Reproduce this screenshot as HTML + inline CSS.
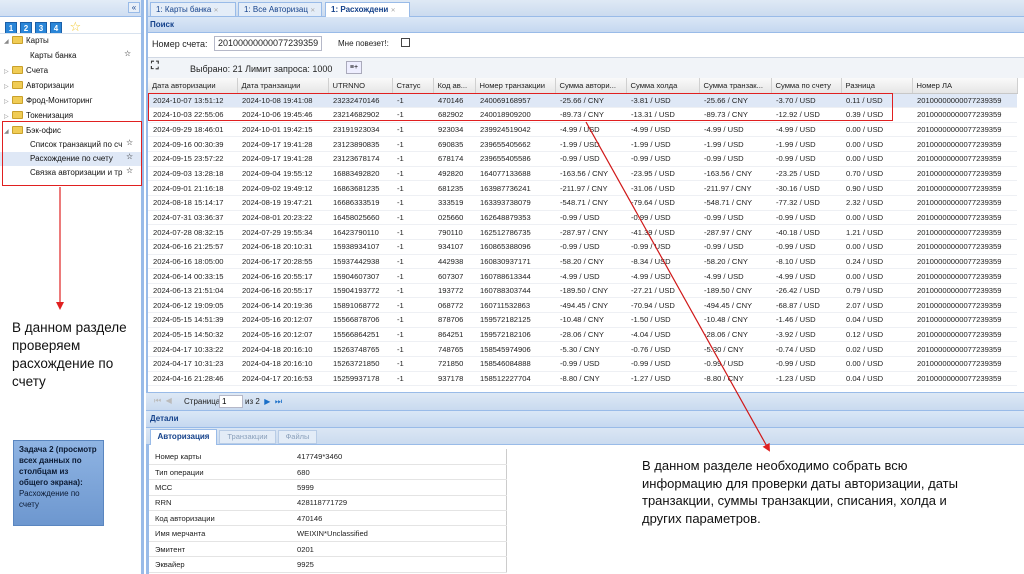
<!DOCTYPE html>
<html><head><meta charset="utf-8"><style>
*{margin:0;padding:0;box-sizing:border-box}
body{width:1024px;height:574px;overflow:hidden;background:#fff;font-family:"Liberation Sans","DejaVu Sans",sans-serif;position:relative;color:#000}
.a{position:absolute}
.sb{left:0;top:0;width:144px;height:574px;background:#fff;border-right:3px solid #99bbe8}
.tree div{position:absolute;font-size:8px;height:14px;line-height:14px;color:#111;white-space:nowrap}
.fold{display:inline-block;width:11px;height:8px;background:#f0cc55;border:1px solid #c9a02b;border-radius:1px;vertical-align:-1px;margin-right:3px}
.tri{display:inline-block;width:8px;color:#888;font-size:6px}
.num{display:inline-block;width:12px;height:12px;background:#2a86d8;color:#fff;font-size:8px;font-weight:bold;text-align:center;line-height:12px;margin-right:3px;border:1px solid #1a5fa8}
.star{color:#f2c830;font-size:13px}
.stare{color:#ddd;font-size:13px}
table{border-collapse:collapse;table-layout:fixed}
.g td{font-size:7.6px;height:14.65px;padding-left:5px;white-space:nowrap;overflow:hidden;color:#222;border-bottom:1px solid #eef0f4}
.g th{font-size:7.6px;height:15px;font-weight:normal;text-align:left;padding-left:4px;background:linear-gradient(#fafafa,#e6e6e6);border-right:1px solid #d0d0d0;border-bottom:1px solid #c8c8c8;white-space:nowrap;overflow:hidden;color:#222}
.hdr{background:linear-gradient(#dae7f6,#c5d8f0);border-bottom:1px solid #99bbe8;color:#15428b;font-weight:bold;font-size:8px;padding-left:4px}
.d td{font-size:7.6px;height:15.4px;border-bottom:1px solid #e4e4e4;padding-left:6px;color:#222}
</style></head><body>

<div class="a sb">
 <div class="a" style="left:0;top:0;width:141px;height:17px;background:linear-gradient(#e3ecf7,#cfdef2);border-bottom:1px solid #99bbe8"></div>
 <div class="a" style="left:128px;top:2px;width:12px;height:11px;border:1px solid #99bbe8;background:#e8eff8;font-size:8px;line-height:9px;text-align:center;color:#15428b">«</div>
 <div class="a" style="left:5px;top:18px;white-space:nowrap"><span class="num">1</span><span class="num">2</span><span class="num">3</span><span class="num">4</span> <span class="star">☆</span></div>
 <div class="a" style="left:0;top:33px;width:141px;height:1px;background:#d8e2ee"></div>
 <div class="tree">
  <div style="left:4px;top:34px"><span class="tri">◢</span><span class="fold"></span>Карты</div>
  <div style="left:30px;top:49px">Карты банка</div><div style="left:124px;top:47px" class="star">☆</div>
  <div style="left:4px;top:64px"><span class="tri">▷</span><span class="fold"></span>Счета</div>
  <div style="left:4px;top:79px"><span class="tri">▷</span><span class="fold"></span>Авторизации</div>
  <div style="left:4px;top:94px"><span class="tri">▷</span><span class="fold"></span>Фрод-Мониторинг</div>
  <div style="left:4px;top:109px"><span class="tri">▷</span><span class="fold"></span>Токенизация</div>
  <div style="left:4px;top:124px"><span class="tri">◢</span><span class="fold"></span>Бэк-офис</div>
  <div style="left:30px;top:138px">Список транзакций по сч</div><div style="left:126px;top:136px" class="stare">☆</div>
  <div style="left:0;top:152px;width:141px;height:14px;background:#dfe8f6"></div>
  <div style="left:30px;top:152px">Расхождение по счету</div><div style="left:126px;top:150px" class="star">☆</div>
  <div style="left:30px;top:166px">Связка авторизации и тр</div><div style="left:126px;top:164px" class="stare">☆</div>
 </div>
 <div class="a" style="left:2px;top:121px;width:140px;height:65px;border:1px solid #e02020"></div>
 <div class="a" style="left:12px;top:319px;width:130px;font-size:13.5px;line-height:18px;color:#111">В данном разделе проверяем расхождение по счету</div>
 <div class="a" style="left:13px;top:440px;width:91px;height:86px;background:linear-gradient(#8fb4e3,#6d97cf);border:1px solid #5a86c0;padding:3px 5px;font-size:8px;line-height:11px;color:#0b1a33"><b>Задача 2 (просмотр всех данных по столбцам из общего экрана):</b> Расхождение по счету</div>
</div>

<!-- main -->
<div class="a" style="left:146px;top:0;width:878px;height:17px;background:linear-gradient(#dfe9f5,#cbdbef);border-bottom:1px solid #99bbe8"></div>
<div class="a" style="left:150px;top:2px;width:86px;height:15px;background:#e4edf8;border:1px solid #99bbe8;font-size:8px;line-height:13px;padding-left:5px;color:#15428b">1: Карты банка <span style="color:#aaa;font-size:6px">✕</span></div>
<div class="a" style="left:238px;top:2px;width:84px;height:15px;background:#e4edf8;border:1px solid #99bbe8;font-size:8px;line-height:13px;padding-left:5px;color:#15428b;white-space:nowrap;overflow:hidden">1: Все Авторизац <span style="color:#aaa;font-size:6px">✕</span></div>
<div class="a" style="left:325px;top:2px;width:85px;height:16px;background:#fff;border:1px solid #99bbe8;border-bottom:none;font-size:8px;line-height:13px;padding-left:5px;color:#15428b;font-weight:bold;white-space:nowrap;overflow:hidden">1: Расхождени <span style="color:#aaa;font-size:6px">✕</span></div>
<div class="a hdr" style="left:146px;top:17px;width:878px;height:16px;line-height:15px">Поиск</div>
<div class="a" style="left:146px;top:33px;width:878px;height:24px;background:#fff"></div>
<div class="a" style="left:152px;top:39px;font-size:9px;color:#222">Номер счета:</div>
<div class="a" style="left:214px;top:36px;width:108px;height:15px;border:1px solid #b5b8c8;font-size:9px;line-height:13px;padding-left:3px;color:#222">20100000000077239359</div>
<div class="a" style="left:338px;top:39px;font-size:8px;color:#222">Мне повезет!:</div>
<div class="a" style="left:401px;top:38px;width:9px;height:9px;border:1px solid #444"></div>
<div class="a" style="left:146px;top:57px;width:878px;height:21px;background:#f1f4f8;border-top:1px solid #d0d8e4"></div>
<div class="a" style="left:151px;top:61px;font-size:11px;line-height:11px;font-weight:bold;color:#333">⛶</div>
<div class="a" style="left:190px;top:64px;font-size:9px;color:#222">Выбрано: 21 Лимит запроса: 1000</div>
<div class="a" style="left:346px;top:61px;width:16px;height:13px;border:1px solid #aab;background:#eef;font-size:7px;text-align:center;line-height:11px">≡+</div>

<table class="a g" style="left:148px;top:78px;width:869px">
<colgroup><col style="width:89px"><col style="width:91px"><col style="width:64px"><col style="width:41px"><col style="width:42px"><col style="width:80px"><col style="width:71px"><col style="width:73px"><col style="width:72px"><col style="width:70px"><col style="width:71px"><col style="width:105px"></colgroup>
<tr><th>Дата авторизации</th><th>Дата транзакции</th><th>UTRNNO</th><th>Статус</th><th>Код ав...</th><th>Номер транзакции</th><th>Сумма автори...</th><th>Сумма холда</th><th>Сумма транзак...</th><th>Сумма по счету</th><th>Разница</th><th>Номер ЛА</th></tr>
<tr style="background:#dfe8f6"><td>2024-10-07 13:51:12</td><td>2024-10-08 19:41:08</td><td>23232470146</td><td>-1</td><td>470146</td><td>240069168957</td><td>-25.66 / CNY</td><td>-3.81 / USD</td><td>-25.66 / CNY</td><td>-3.70 / USD</td><td>0.11 / USD</td><td>20100000000077239359</td></tr>
<tr><td>2024-10-03 22:55:06</td><td>2024-10-06 19:45:46</td><td>23214682902</td><td>-1</td><td>682902</td><td>240018909200</td><td>-89.73 / CNY</td><td>-13.31 / USD</td><td>-89.73 / CNY</td><td>-12.92 / USD</td><td>0.39 / USD</td><td>20100000000077239359</td></tr>
<tr><td>2024-09-29 18:46:01</td><td>2024-10-01 19:42:15</td><td>23191923034</td><td>-1</td><td>923034</td><td>239924519042</td><td>-4.99 / USD</td><td>-4.99 / USD</td><td>-4.99 / USD</td><td>-4.99 / USD</td><td>0.00 / USD</td><td>20100000000077239359</td></tr>
<tr><td>2024-09-16 00:30:39</td><td>2024-09-17 19:41:28</td><td>23123890835</td><td>-1</td><td>690835</td><td>239655405662</td><td>-1.99 / USD</td><td>-1.99 / USD</td><td>-1.99 / USD</td><td>-1.99 / USD</td><td>0.00 / USD</td><td>20100000000077239359</td></tr>
<tr><td>2024-09-15 23:57:22</td><td>2024-09-17 19:41:28</td><td>23123678174</td><td>-1</td><td>678174</td><td>239655405586</td><td>-0.99 / USD</td><td>-0.99 / USD</td><td>-0.99 / USD</td><td>-0.99 / USD</td><td>0.00 / USD</td><td>20100000000077239359</td></tr>
<tr><td>2024-09-03 13:28:18</td><td>2024-09-04 19:55:12</td><td>16883492820</td><td>-1</td><td>492820</td><td>164077133688</td><td>-163.56 / CNY</td><td>-23.95 / USD</td><td>-163.56 / CNY</td><td>-23.25 / USD</td><td>0.70 / USD</td><td>20100000000077239359</td></tr>
<tr><td>2024-09-01 21:16:18</td><td>2024-09-02 19:49:12</td><td>16863681235</td><td>-1</td><td>681235</td><td>163987736241</td><td>-211.97 / CNY</td><td>-31.06 / USD</td><td>-211.97 / CNY</td><td>-30.16 / USD</td><td>0.90 / USD</td><td>20100000000077239359</td></tr>
<tr><td>2024-08-18 15:14:17</td><td>2024-08-19 19:47:21</td><td>16686333519</td><td>-1</td><td>333519</td><td>163393738079</td><td>-548.71 / CNY</td><td>-79.64 / USD</td><td>-548.71 / CNY</td><td>-77.32 / USD</td><td>2.32 / USD</td><td>20100000000077239359</td></tr>
<tr><td>2024-07-31 03:36:37</td><td>2024-08-01 20:23:22</td><td>16458025660</td><td>-1</td><td>025660</td><td>162648879353</td><td>-0.99 / USD</td><td>-0.99 / USD</td><td>-0.99 / USD</td><td>-0.99 / USD</td><td>0.00 / USD</td><td>20100000000077239359</td></tr>
<tr><td>2024-07-28 08:32:15</td><td>2024-07-29 19:55:34</td><td>16423790110</td><td>-1</td><td>790110</td><td>162512786735</td><td>-287.97 / CNY</td><td>-41.39 / USD</td><td>-287.97 / CNY</td><td>-40.18 / USD</td><td>1.21 / USD</td><td>20100000000077239359</td></tr>
<tr><td>2024-06-16 21:25:57</td><td>2024-06-18 20:10:31</td><td>15938934107</td><td>-1</td><td>934107</td><td>160865388096</td><td>-0.99 / USD</td><td>-0.99 / USD</td><td>-0.99 / USD</td><td>-0.99 / USD</td><td>0.00 / USD</td><td>20100000000077239359</td></tr>
<tr><td>2024-06-16 18:05:00</td><td>2024-06-17 20:28:55</td><td>15937442938</td><td>-1</td><td>442938</td><td>160830937171</td><td>-58.20 / CNY</td><td>-8.34 / USD</td><td>-58.20 / CNY</td><td>-8.10 / USD</td><td>0.24 / USD</td><td>20100000000077239359</td></tr>
<tr><td>2024-06-14 00:33:15</td><td>2024-06-16 20:55:17</td><td>15904607307</td><td>-1</td><td>607307</td><td>160788613344</td><td>-4.99 / USD</td><td>-4.99 / USD</td><td>-4.99 / USD</td><td>-4.99 / USD</td><td>0.00 / USD</td><td>20100000000077239359</td></tr>
<tr><td>2024-06-13 21:51:04</td><td>2024-06-16 20:55:17</td><td>15904193772</td><td>-1</td><td>193772</td><td>160788303744</td><td>-189.50 / CNY</td><td>-27.21 / USD</td><td>-189.50 / CNY</td><td>-26.42 / USD</td><td>0.79 / USD</td><td>20100000000077239359</td></tr>
<tr><td>2024-06-12 19:09:05</td><td>2024-06-14 20:19:36</td><td>15891068772</td><td>-1</td><td>068772</td><td>160711532863</td><td>-494.45 / CNY</td><td>-70.94 / USD</td><td>-494.45 / CNY</td><td>-68.87 / USD</td><td>2.07 / USD</td><td>20100000000077239359</td></tr>
<tr><td>2024-05-15 14:51:39</td><td>2024-05-16 20:12:07</td><td>15566878706</td><td>-1</td><td>878706</td><td>159572182125</td><td>-10.48 / CNY</td><td>-1.50 / USD</td><td>-10.48 / CNY</td><td>-1.46 / USD</td><td>0.04 / USD</td><td>20100000000077239359</td></tr>
<tr><td>2024-05-15 14:50:32</td><td>2024-05-16 20:12:07</td><td>15566864251</td><td>-1</td><td>864251</td><td>159572182106</td><td>-28.06 / CNY</td><td>-4.04 / USD</td><td>-28.06 / CNY</td><td>-3.92 / USD</td><td>0.12 / USD</td><td>20100000000077239359</td></tr>
<tr><td>2024-04-17 10:33:22</td><td>2024-04-18 20:16:10</td><td>15263748765</td><td>-1</td><td>748765</td><td>158545974906</td><td>-5.30 / CNY</td><td>-0.76 / USD</td><td>-5.30 / CNY</td><td>-0.74 / USD</td><td>0.02 / USD</td><td>20100000000077239359</td></tr>
<tr><td>2024-04-17 10:31:23</td><td>2024-04-18 20:16:10</td><td>15263721850</td><td>-1</td><td>721850</td><td>158546084888</td><td>-0.99 / USD</td><td>-0.99 / USD</td><td>-0.99 / USD</td><td>-0.99 / USD</td><td>0.00 / USD</td><td>20100000000077239359</td></tr>
<tr><td>2024-04-16 21:28:46</td><td>2024-04-17 20:16:53</td><td>15259937178</td><td>-1</td><td>937178</td><td>158512227704</td><td>-8.80 / CNY</td><td>-1.27 / USD</td><td>-8.80 / CNY</td><td>-1.23 / USD</td><td>0.04 / USD</td><td>20100000000077239359</td></tr>
</table>
<div class="a" style="left:148px;top:93px;width:745px;height:28px;border:1px solid #e02020"></div>

<!-- pager -->
<div class="a" style="left:146px;top:392px;width:878px;height:19px;background:linear-gradient(#dde8f5,#c9daef);border-top:1px solid #99bbe8;border-bottom:1px solid #99bbe8"></div>
<div class="a" style="left:154px;top:396px;font-size:8px;color:#bbb">⏮ &nbsp;◀</div>
<div class="a" style="left:184px;top:397px;font-size:8px;color:#222">Страница</div>
<div class="a" style="left:219px;top:395px;width:24px;height:13px;background:#fff;border:1px solid #b5b8c8;font-size:8px;padding-left:2px;line-height:11px">1</div>
<div class="a" style="left:245px;top:397px;font-size:8px;color:#222">из 2 &nbsp;<span style="color:#1a6fc8">▶ &nbsp;⏭</span></div>
<div class="a hdr" style="left:146px;top:411px;width:878px;height:17px;line-height:16px">Детали</div>
<div class="a" style="left:146px;top:428px;width:878px;height:17px;background:linear-gradient(#dbe6f4,#cbdbef);border-bottom:1px solid #99bbe8"></div>
<div class="a" style="left:150px;top:429px;width:67px;height:16px;background:#fff;border:1px solid #99bbe8;border-bottom:none;font-size:8px;font-weight:bold;color:#15428b;text-align:center;line-height:14px">Авторизация</div>
<div class="a" style="left:219px;top:430px;width:57px;height:14px;background:#e3ecf7;border:1px solid #b8cce6;font-size:7.5px;color:#8aa0bb;text-align:center;line-height:12px">Транзакции</div>
<div class="a" style="left:278px;top:430px;width:39px;height:14px;background:#e3ecf7;border:1px solid #b8cce6;font-size:7.5px;color:#8aa0bb;text-align:center;line-height:12px">Файлы</div>
<div class="a" style="left:146px;top:445px;width:3px;height:129px;background:#99bbe8"></div>
<div class="a" style="left:146px;top:0;width:2px;height:392px;background:#99bbe8"></div>
<table class="a d" style="left:149px;top:449px;width:358px;border-right:1px solid #ccc">
<colgroup><col style="width:142px"><col></colgroup>
<tr><td>Номер карты</td><td>417749*3460</td></tr>
<tr><td>Тип операции</td><td>680</td></tr>
<tr><td>MCC</td><td>5999</td></tr>
<tr><td>RRN</td><td>428118771729</td></tr>
<tr><td>Код авторизации</td><td>470146</td></tr>
<tr><td>Имя мерчанта</td><td>WEIXIN*Unclassified</td></tr>
<tr><td>Эмитент</td><td>0201</td></tr>
<tr><td>Эквайер</td><td>9925</td></tr>
</table>
<div class="a" style="left:642px;top:457px;white-space:nowrap;font-size:13px;line-height:17.6px;color:#111">В данном разделе необходимо собрать всю<br>информацию для проверки даты авторизации, даты<br>транзакции, суммы транзакции, списания, холда и<br>других параметров.</div>

<svg class="a" style="left:0;top:0" width="1024" height="574">
<defs><marker id="m" markerWidth="8" markerHeight="8" refX="6" refY="4" orient="auto" markerUnits="userSpaceOnUse"><path d="M0,0 L8,4 L0,8 z" fill="#e02020"/></marker></defs>
<line x1="60" y1="187" x2="60" y2="308" stroke="#e02020" stroke-width="1.2" marker-end="url(#m)"/>
<line x1="586" y1="122" x2="769" y2="450" stroke="#d01818" stroke-width="1.2" marker-end="url(#m)"/>
</svg>
</body></html>
